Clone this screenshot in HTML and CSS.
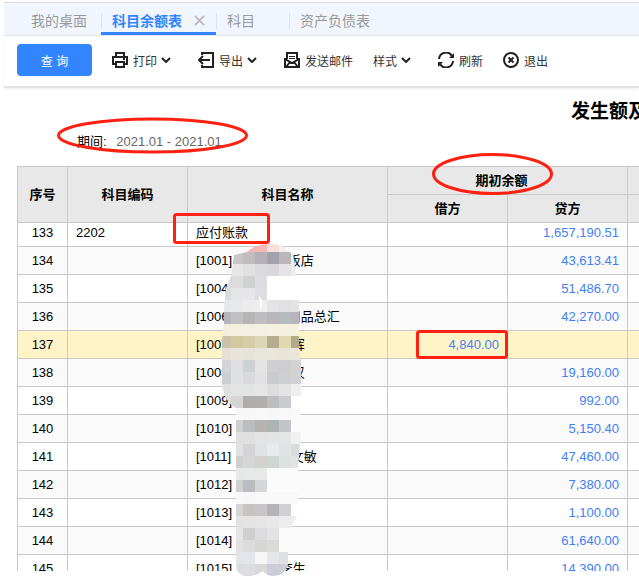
FILE: index.html
```html
<!DOCTYPE html>
<html lang="zh-CN">

<head>
    <meta charset="UTF-8">
    <meta name="viewport" content="width=device-width, initial-scale=1">
    <title>科目余额表</title>
    <link rel="stylesheet" href="styles.css">
</head>

<body>

    <nav class="tabs">
        <a class="tab tab-home" href="#">我的桌面</a>
        <a class="tab active" href="#">科目余额表
            <svg class="close" viewBox="0 0 12 12"><path d="M1 1l10 10M11 1L1 11"/></svg>
        </a>
        <a class="tab tab-subject" href="#">科目</a>
        <a class="tab" href="#">资产负债表</a>
    </nav>

    <div class="toolbar">
        <button class="query-btn">查 询</button>
        <button class="tool print">
            <svg class="icon" viewBox="0 0 16 16"><path d="M4 5V1h8v4M4 12H1V5h14v7h-3M4 10h8v5H4z"/><path d="M11 7h2"/></svg>
            打印
            <svg class="arrow" viewBox="0 0 10 6"><path d="M1 1l4 4 4-4"/></svg>
        </button>
        <button class="tool export">
            <svg class="icon" viewBox="0 0 16 16"><path d="M4 3V1h11v14H4v-2M12 8H1M5 4L1 8l4 4"/></svg>
            导出
            <svg class="arrow" viewBox="0 0 10 6"><path d="M1 1l4 4 4-4"/></svg>
        </button>
        <button class="tool mail">
            <svg class="icon" viewBox="0 0 16 16"><path d="M3 7V1h10v6M1 6v9h14V6M1 7l7 4 7-4M2 15l4-5M14 15l-4-5"/><path class="thin" d="M5 4.500h6M5 6.500h6"/></svg>
            发送邮件
        </button>
        <button class="tool style">
            样式
            <svg class="arrow" viewBox="0 0 10 6"><path d="M1 1l4 4 4-4"/></svg>
        </button>
        <button class="tool refresh">
            <svg class="icon" viewBox="0 0 16 16"><path d="M1 7a7 7 0 0 1 13-3M15 9a7 7 0 0 1-13 3"/><path class="fill" d="M16 1v5h-5zM0 15v-5h5z"/></svg>
            刷新
        </button>
        <button class="tool">
            <svg class="icon" viewBox="0 0 16 16"><circle cx="8" cy="8" r="7"/><path d="M5.500 5.500l5 5M10.500 5.500l-5 5"/></svg>
            退出
        </button>
    </div>

    <main class="sheet">
        <h1>发生额及</h1>
        <p class="period">期间: <span>2021.01 - 2021.01</span></p>

        <div class="table-box">
            <table>
                <colgroup>
                    <col class="col-no">
                    <col class="col-code">
                    <col class="col-name">
                    <col class="col-money">
                    <col class="col-money">
                    <col>
                </colgroup>
                <thead>
                    <tr>
                        <th rowspan="2">序号</th>
                        <th rowspan="2">科目编码</th>
                        <th rowspan="2">科目名称</th>
                        <th class="group" colspan="2">期初余额</th>
                        <th></th>
                    </tr>
                    <tr>
                        <th>借方</th>
                        <th>贷方</th>
                        <th></th>
                    </tr>
                </thead>
                <tbody>
                    <tr class="first"><td>133</td><td>2202</td><td>应付账款</td><td></td><td>1,657,190.51</td><td></td></tr>
                    <tr><td>134</td><td></td><td>[1001] <span class="gap"></span>饭店</td><td></td><td>43,613.41</td><td></td></tr>
                    <tr><td>135</td><td></td><td>[1004]</td><td></td><td>51,486.70</td><td></td></tr>
                    <tr><td>136</td><td></td><td>[1006] <span class="gap"></span>用品总汇</td><td></td><td>42,270.00</td><td></td></tr>
                    <tr class="selected"><td>137</td><td></td><td>[1007] <span class="gap wide"></span>辉</td><td>4,840.00</td><td></td><td></td></tr>
                    <tr><td>138</td><td></td><td>[1008] <span class="gap wide"></span>汉</td><td></td><td>19,160.00</td><td></td></tr>
                    <tr><td>139</td><td></td><td>[1009]</td><td></td><td>992.00</td><td></td></tr>
                    <tr><td>140</td><td></td><td>[1010]</td><td></td><td>5,150.40</td><td></td></tr>
                    <tr><td>141</td><td></td><td>[1011] <span class="gap wide"></span>文敏</td><td></td><td>47,460.00</td><td></td></tr>
                    <tr><td>142</td><td></td><td>[1012]</td><td></td><td>7,380.00</td><td></td></tr>
                    <tr><td>143</td><td></td><td>[1013]</td><td></td><td>1,100.00</td><td></td></tr>
                    <tr><td>144</td><td></td><td>[1014]</td><td></td><td>61,640.00</td><td></td></tr>
                    <tr><td>145</td><td></td><td>[1015] <span class="gap narrow"></span>李生</td><td></td><td>14,390.00</td><td></td></tr>
                </tbody>
            </table>
        </div>
    </main>

    <!-- Mosaic over the customer names and the red marks -->
    <svg class="marks" width="639" height="579" viewBox="0 0 639 579">
        <defs>
            <clipPath id="brush">
                <path d="M234 255L247 252Q255 244 270 244Q284 244 288 251L293 254L296 276H267V300H299V350L301 360V396L291 400V408H301L300 420L291 432H301L300 444L298 468V492L297 516L291 528H279V552H288V565Q284 576 274 576Q266 576 263 571Q255 577 244 576Q236 573 236 565V408Q224 402 222 384V340L224 324V308L226 288L231 276Z"/>
            </clipPath>
        </defs>
        <g id="mosaic" clip-path="url(#brush)" shape-rendering="crispEdges"></g>
        <path d="M259 295l3 6-1 10-1-5z" fill="#fff"/>
        <g class="red">
            <ellipse cx="152.500" cy="135.500" rx="94" ry="16.500"/>
            <ellipse cx="492.500" cy="174" rx="59" ry="19.500"/>
            <rect x="174.500" y="214.500" width="94" height="28" rx="2"/>
            <rect x="417.500" y="331.500" width="89" height="26" rx="2"/>
        </g>
    </svg>

    <script>
        // one string per 12px line, seven blocks each, "-" = empty
        const rows = [
            "- - f8b8b8 f8b8b8 f9dede f4efef -",
            "- c9c6c8 c0bdbe b5afba a3a1ab bab6b9 eeeeee",
            "- e6e6e6 e0e0e0 dadadc d9d7dd e4e4e4 eeeeee",
            "dcdcdc dcdcdc cfd2d0 dddce0 - - -",
            "d9dde0 e4e5e5 e6e6e8 dedde2 - - -",
            "e4e6e8 e8e9ea ececec eeeeee e4e4e4 e1e1e3 e3e3e3",
            "b4b5bd c0c0c2 b5b5b5 bebdc0 b8b7bb b4bbbd b8b5ba",
            "f1eedf f4f0e0 f3f0e1 f3f0e2 f5f1e0 f5f1e0 f5f1e0",
            "c9c3a8 d2c9a0 d5cca8 ddd5b8 b4ac8c e0d8b0 b3aa86",
            "e5e1d6 e7e4da e6e3da e8e5dc e9e6dc e8e4d8 e9e5da",
            "d3d4d7 e0e0e1 ccd2d3 e4e4e4 cfcfd1 cecece d2d2d3",
            "cdced3 e0e0e1 d9d9dc e2e2e2 cacbce cfcfd0 d2d2d4",
            "e0e0e1 e3e3e3 e2e3e3 e5e5e6 dedddd e4e4e5 eeeeee",
            "dcdddd d5d5d6 b0adad b1afae bcbdbf cbcad0 -",
            "- f7f7f7 f7f7f7 f8f8f8 f7f7f7 f8f8f8 f9f9f9",
            "- d0d0ce babcbe b4b3b2 adb2b2 c6c4cb -",
            "- e0e0df e0e0e0 e3e3e3 e3e4e4 e5e5e6 f0f0f0",
            "- dfe1e2 d4d4d7 dfe3e6 e8ebed dfe3e2 dadcdb",
            "- d0d1cf d5d6d5 d2d3cf ced6d3 dde1df e1e3e2",
            "- e6e8e7 e7e9e8 e8e8e8 fafafa fafafa fafafa",
            "- cfcfcd bbbcbf d5d6d8 fbfbfb fbfbfb fbfbfb",
            "- f8f8f8 f7f7f7 f8f8f8 f8f8f8 f8f8f8 f8f8f8",
            "- d5d4d3 c6c3c2 c7c5c6 b5b3b7 cfd0d4 -",
            "- e2e3e2 e4e4e5 e5e5e5 e8e8e8 ececec eeeeee",
            "- e4e4e4 cfcfce dcdbde e3e3e4 - -",
            "- e1e1e1 dcdcdc d5d6d4 dadad9 - -",
            "- e2e4e7 e2e5e9 f6f6f6 e5e6e7 e0dfe2 -",
            "- dcdcdd dcdde0 d8d8d8 cbced6 cbced6 -"
        ];
        let blocks = "";
        rows.forEach((row, y) => {
            row.split(" ").forEach((color, x) => {
                if (color === "-") return;
                blocks += `<rect x="${219 + x * 12}" y="${240 + y * 12}" width="12" height="12" fill="#${color}"/>`;
            });
        });
        document.getElementById("mosaic").innerHTML = blocks;
    </script>
</body>

</html>
```

FILE: styles.css
```css
* {
    box-sizing: border-box;
}

body {
    display: flex;
    flex-direction: column;
    position: relative;
    height: 100vh;
    margin: 0;
    padding: 2px 0 8px 4px;
    overflow: hidden;
    background: #fff;
    color: #000;
    font-family: "Liberation Sans", "Noto Sans CJK SC", sans-serif;
    font-size: 13px;
}

.tabs {
    display: flex;
    flex: none;
    height: 34px;
    padding-left: 16px;
    border-top: 1px solid #d8dbe0;
    border-bottom: 1px solid #e2e5ee;
    background: #f1f6fe;
}

.tab {
    position: relative;
    display: flex;
    align-items: center;
    padding: 2px 11px 0;
    color: #999;
    font-size: 14px;
    text-decoration: none;
    white-space: nowrap;
}

.tab + .tab::before {
    content: "";
    position: absolute;
    left: 0;
    top: 10px;
    width: 1px;
    height: 16px;
    background: #dfe3ec;
}

.tab-home {
    padding-right: 14px;
}

.tab-subject {
    padding-right: 34px;
}

.tab.active {
    color: #3385ff;
    font-weight: bold;
    box-shadow: inset 0 -3px #3385ff;
}

.close {
    width: 11px;
    height: 11px;
    margin-left: 12px;
    fill: none;
    stroke: #bbb;
    stroke-width: 2;
}

.toolbar {
    display: flex;
    flex: none;
    align-items: center;
    height: 52px;
    padding: 0 13px 2px;
    border-bottom: 2px solid #e3e3e3;
    box-shadow: 0 1px 3px #eee;
}

button {
    font-family: inherit;
    cursor: pointer;
}

.query-btn {
    width: 75px;
    height: 32px;
    margin-right: 20px;
    border: none;
    border-radius: 4px;
    background: #3385ff;
    color: #fff;
    font-size: 12px;
}

.tool {
    display: flex;
    align-items: center;
    gap: 4px;
    margin-right: 20px;
    padding: 0;
    border: none;
    background: none;
    color: #333;
    font-size: 12px;
    white-space: nowrap;
}

.print,
.export,
.style {
    margin-right: 27px;
}

.icon {
    width: 16px;
    height: 16px;
    margin-right: 1px;
}

.arrow {
    width: 10px;
    height: 6px;
}

.icon,
.arrow {
    fill: none;
    stroke: #222;
    stroke-width: 2;
}

.icon .thin {
    stroke-width: 1;
}

.icon .fill {
    fill: #222;
    stroke: none;
}

.sheet {
    display: flex;
    flex: 1;
    flex-direction: column;
    min-height: 0;
    padding-left: 13px;
}

h1 {
    margin: 10px 0 0;
    padding-left: 554px;
    font-size: 19px;
    line-height: 28px;
    white-space: nowrap;
}

.period {
    margin: 8px 0 16px;
    padding-left: 60px;
    line-height: 16px;
}

.period span {
    margin-left: 6px;
    color: #666;
}

.table-box {
    flex: 1;
    min-height: 0;
    overflow: hidden;
}

table {
    width: 100%;
    border-collapse: separate;
    border-spacing: 0;
    border-top: 1px solid #c8c8c8;
    border-left: 1px solid #c8c8c8;
    table-layout: fixed;
}

.col-no {
    width: 50px;
}

.col-code,
.col-money {
    width: 120px;
}

.col-name {
    width: 200px;
}

th,
td {
    height: 28px;
    padding: 0 8px;
    border-right: 1px solid #c8c8c8;
    border-bottom: 1px solid #c8c8c8;
    line-height: 16px;
    white-space: nowrap;
}

th {
    background: #e8e8e8;
}

th.group {
    padding-right: 20px;
}

th:last-child,
td:last-child {
    padding: 0;
    border-right: none;
}

td:first-child {
    text-align: center;
}

td:nth-child(4),
td:nth-child(5) {
    color: #3f80f5;
    text-align: right;
}

tbody tr:nth-child(even) {
    background: #fafafa;
}

tbody tr.selected {
    background: #fff4c8;
}

/* partly scrolled under the header */
.first td {
    height: 24px;
    padding-bottom: 4px;
}

.gap {
    display: inline-block;
    width: 52px;
}

.gap.wide {
    width: 56px;
}

.gap.narrow {
    width: 44px;
}

.marks {
    position: absolute;
    left: 0;
    top: 0;
    pointer-events: none;
}

.red {
    fill: none;
    stroke: #ff2010;
    stroke-width: 3;
}
```
